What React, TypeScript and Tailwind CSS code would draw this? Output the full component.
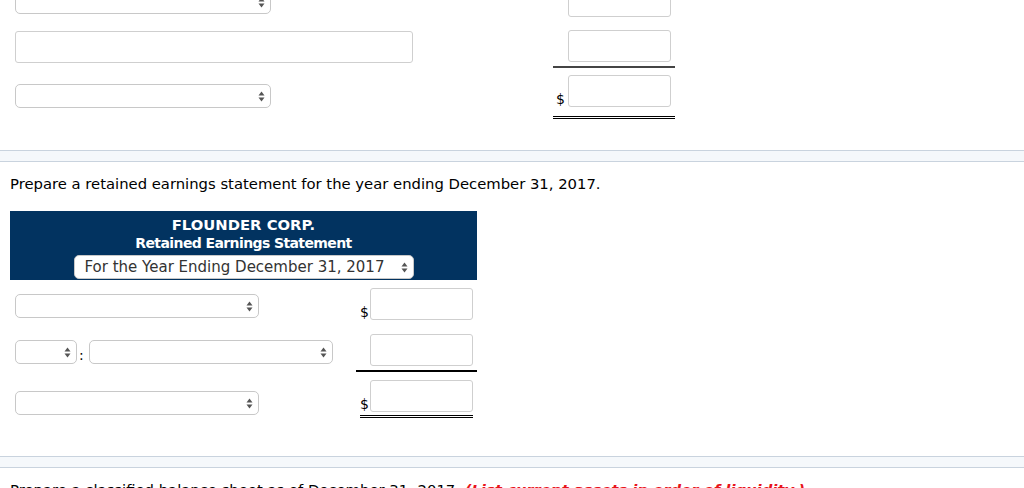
import React from "react";

const font = { fontFamily: '"DejaVu Sans", Verdana, sans-serif' };

function Arrows() {
  return (
    <svg width="7" height="11" viewBox="0 0 7 11" className="shrink-0">
      <path d="M3.5 0.5 L6.5 4.5 L0.5 4.5 Z" fill="#555" />
      <path d="M0.5 6.5 L6.5 6.5 L3.5 10.5 Z" fill="#555" />
    </svg>
  );
}

function Select({ w, className = "", children }: { w: string; className?: string; children?: React.ReactNode }) {
  return (
    <div
      className={`flex h-[24px] items-center justify-between rounded-[5px] border border-[#c8c8c8] bg-white pl-[10px] pr-[5px] ${w} ${className}`}
    >
      <span className="truncate text-[15px] text-[#333]">{children}</span>
      <Arrows />
    </div>
  );
}

function Field({ w = "w-[103px]" }: { w?: string }) {
  return <div className={`h-[32px] rounded-[3px] border border-[#cfcfcf] bg-white ${w}`} />;
}

function Band() {
  return <div className="h-[12px] border-y border-[#c9d3de] bg-[#f5f8fb]" />;
}

export default function App() {
  return (
    <div className="h-[488px] w-[1024px] overflow-hidden bg-white text-[14.8px] text-black" style={font}>
      <div className="-mt-[20px]">
        {/* previous statement, tail end */}
        <div className="flex h-[46px]">
          <div className="w-[553px] pl-[15px] pt-[10px]">
            <Select w="w-[256px]" />
          </div>
          <div className="w-[122px] pl-[15px] pt-[5px]">
            <Field w="w-[103px]" />
          </div>
        </div>
        <div className="flex">
          <div className="w-[553px] pl-[15px] pt-[5px]">
            <Field w="w-[398px]" />
          </div>
          <div className="w-[122px] border-b-2 border-[#444] pb-[4px] pl-[15px] pt-[4px]">
            <Field w="w-[103px]" />
          </div>
        </div>
        <div className="flex">
          <div className="w-[553px] pl-[15px] pt-[16px]">
            <Select w="w-[256px]" />
          </div>
          <div className="w-[122px] border-b-[3px] border-double border-black pb-[9px] pt-[7px]">
            <div className="flex items-end">
              <span className="w-[15px] pl-[3px] text-[14px] leading-[16px]">$</span>
              <Field w="w-[103px]" />
            </div>
          </div>
        </div>
      </div>

      <div className="mt-[31px]">
        <Band />
      </div>

      <p className="mt-[12px] pl-[10px] leading-[20px]">
        Prepare a retained earnings statement for the year ending December 31, 2017.
      </p>

      <div className="ml-[10px] mt-[17px] w-[467px]">
        <div className="flex h-[69px] flex-col items-center bg-[#023360] pt-[5px] text-white">
          <div className="text-[14.8px] font-bold leading-[18px]">FLOUNDER CORP.</div>
          <div className="text-[14px] font-bold leading-[18px] tracking-[-0.6px]">Retained Earnings Statement</div>
          <Select w="w-[340px]" className="mt-[3px] h-[23px]">
            For the Year Ending December 31, 2017
          </Select>
        </div>

        <div className="flex h-[48px]">
          <div className="w-[346px] pl-[5px] pt-[14px]">
            <Select w="w-[244px]" />
          </div>
          <div className="w-[121px] pl-[4px] pt-[8px]">
            <div className="flex items-end">
              <span className="w-[10px] text-[14px] leading-[16px]">$</span>
              <Field w="w-[103px]" />
            </div>
          </div>
        </div>

        <div className="flex">
          <div className="flex w-[346px] items-start pl-[5px] pt-[12px]">
            <Select w="w-[62px]" />
            <span className="ml-[2px] mt-[6px] w-[10px] text-[14px] leading-[18px]">:</span>
            <Select w="w-[244px]" />
          </div>
          <div className="w-[121px] border-b-2 border-black pb-[4px] pl-[14px] pt-[6px]">
            <Field w="w-[103px]" />
          </div>
        </div>

        <div className="flex">
          <div className="w-[346px] pl-[5px] pt-[19px]">
            <Select w="w-[244px]" />
          </div>
          <div className="w-[121px] pt-[8px]">
            <div className="ml-[4px] mr-[4px] border-b-[3px] border-double border-black pb-[3px]">
              <div className="flex items-end">
                <span className="w-[10px] text-[14px] leading-[16px]">$</span>
                <Field w="w-[103px]" />
              </div>
            </div>
          </div>
        </div>
      </div>

      <div className="mt-[38px]">
        <Band />
      </div>

      <p className="mt-[12px] pl-[10px] leading-[20px]">
        Prepare a classified balance sheet as of December 31, 2017.{" "}
        <span className="font-bold italic text-[#e8141b]">(List current assets in order of liquidity.)</span>
      </p>
    </div>
  );
}
